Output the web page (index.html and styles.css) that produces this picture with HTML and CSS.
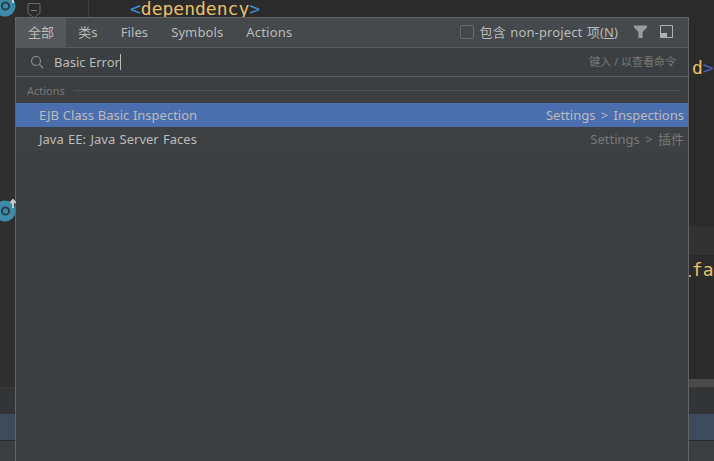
FILE: index.html
```html
<!DOCTYPE html>
<html lang="zh">
<head>
<meta charset="utf-8">
<title>Search Everywhere</title>
<link rel="stylesheet" href="styles.css">
</head>
<body>
<div class="editor">
  <div class="code-area">
    <span class="tag-open"><i>&lt;</i>dependency<i>&gt;</i></span>
    <span class="tag-d">d<i>&gt;</i></span>
    <span class="code-fa">.fa</span>
    <span class="code-dot"></span>
    <svg class="fold" width="14" height="16" viewBox="0 0 14 16"><path d="M1 0.5V10L7 15L13 10V0.5H1" fill="none" stroke="#686a6c"/><path d="M4 7.5H10" stroke="#787a7c"/></svg>
    <span class="gutter-line"></span>
    <span class="right-strip"></span>
    <span class="gutter"></span>
    <svg class="badge badge-a" width="16" height="24" viewBox="0 0 16 24"><circle cx="5" cy="12" r="10.5" fill="#3d8ba8"/><circle cx="5.5" cy="12" r="3.6" fill="none" stroke="#2c3e48" stroke-width="2"/><path d="M13 9V1M10.5 4L13 1L15.5 4" fill="none" stroke="#c4ccd0" stroke-width="2"/></svg>
    <svg class="badge badge-b" width="16" height="24" viewBox="0 0 16 24"><circle cx="5" cy="12" r="10.5" fill="#3d8ba8"/><circle cx="5.5" cy="12" r="3.6" fill="none" stroke="#2c3e48" stroke-width="2"/><path d="M13 9V1M10.5 4L13 1L15.5 4" fill="none" stroke="#c4ccd0" stroke-width="2"/></svg>
  </div>
  <div class="band-dark"></div>
  <div class="band-blue"></div>
  <div class="band-foot"></div>
</div>

<section class="popup">
  <header class="tabs">
    <span class="tab tab-active">全部</span>
    <span class="tab">类s</span>
    <span class="tab">Files</span>
    <span class="tab">Symbols</span>
    <span class="tab">Actions</span>
    <span class="spacer"></span>
    <span class="check"></span>
    <span class="check-label">包含 non-project 项(<u>N</u>)</span>
    <svg class="icon-filter" width="13" height="13" viewBox="0 0 13 13"><path d="M0 0.5H13V2.5L8.6 7V13H4.4V7L0 2.5Z" fill="#9a9c9e"/></svg>
    <svg class="icon-dock" width="13" height="13" viewBox="0 0 13 13"><path d="M0.5 0.5H12.5V12.5H0.5Z" fill="none" stroke="#afb1b3"/><path d="M0.5 8H7V12.5H0.5Z" fill="#afb1b3"/></svg>
  </header>
  <div class="search">
    <svg class="icon-search" width="14" height="14" viewBox="0 0 14 14"><circle cx="6" cy="6" r="4.5" fill="none" stroke="#8c8e90" stroke-width="1.1"/><path d="M9.4 9.4L13 13" stroke="#8c8e90" stroke-width="1.2"/></svg>
    <span class="query">Basic Error</span><span class="caret"></span>
    <span class="spacer"></span>
    <span class="hint">键入 / 以查看命令</span>
  </div>
  <div class="group"><span class="group-name">Actions</span><span class="group-rule"></span></div>
  <div class="row row-selected"><span class="row-name">EJB Class Basic Inspection</span><span class="row-loc">Settings &gt; Inspections</span></div>
  <div class="row row-plain"><span class="row-name">Java EE: Java Server Faces</span><span class="row-loc">Settings &gt; 插件</span></div>
</section>
</body>
</html>
```
FILE: styles.css
```css
* { box-sizing: border-box; }
html, body { margin: 0; height: 100%; }
body {
  width: 714px;
  height: 461px;
  overflow: hidden;
  position: relative;
  background: #2b2b2b;
  font-family: "Noto Sans", "Noto Sans CJK SC", sans-serif;
  font-size: 13px;
  line-height: 16px;
}
i { font-style: normal; }
.editor { height: 461px; display: flex; flex-direction: column; }
.code-area { height: 388px; position: relative; overflow: hidden; background: linear-gradient(to bottom, #2b2b2b 0, #2b2b2b 226px, #323232 226px, #323232 255px, #2b2b2b 255px); border-bottom: 1px solid #3a3a3a; }
.band-dark { height: 26px; background: #333435; }
.band-blue { height: 26px; background: #3d4b5c; }
.band-foot { flex: 1; background: #3c3f41; border-top: 1px solid #2b2b2b; }

.gutter { position: absolute; left: 0; top: 0; width: 15px; height: 387px; background: #2f2f2f; }
.right-strip { position: absolute; left: 689px; right: 0; top: 379px; height: 8px; background: #4a4a4a; }

.tag-open, .tag-d, .code-fa {
  position: absolute;
  font-family: "DejaVu Sans Mono", monospace;
  font-size: 18px;
  color: #e8bf6a;
  line-height: 18px;
}
.tag-open { left: 130px; top: 0; }
.tag-open i { color: #3d8fd6; }
.tag-d { left: 692px; top: 59px; }
.tag-d i { color: #4a5fc0; }
.code-fa { left: 681px; top: 261px; }
.code-dot { position: absolute; left: 689px; top: 275px; width: 2px; height: 2px; background: #b8935a; }

.gutter-line { position: absolute; left: 88px; top: 0; width: 1px; height: 17px; background: #3a4a3a; }
.fold { position: absolute; left: 27px; top: 3px; }

.badge { position: absolute; left: 0; z-index: 1; }
.badge-a { top: -6px; }
.badge-b { top: 199px; }

.popup {
  position: absolute;
  left: 15px;
  top: 17px;
  width: 674px;
  height: 444px;
  background: #3c3f41;
  border: 1px solid #646464;
  border-bottom: 0;
  color: #bbbbbb;
}
.tabs {
  height: 30px;
  display: flex;
  align-items: center;
  background: #45494b;
  border-bottom: 1px solid #5a5a5a;
}
.tab { height: 29px; display: flex; align-items: center; padding: 0 12px 2px; letter-spacing: 0.1px; }
.tab-active { background: #54585b; }
.tab:nth-child(2) { padding-right: 10px; }
.tab:nth-child(3) { padding: 0 12px 2px 13px; }
.tab:nth-child(4) { padding-left: 11px; }
.tab:nth-child(5) { padding-left: 11px; letter-spacing: 0.2px; }
.spacer { flex: 1; }
.check { width: 14px; height: 14px; border: 1px solid #6b6b6b; border-radius: 2px; background: #43474a; margin: 0 6px 2px 0; }
.check-label { margin: 0 16px 2px 0; word-spacing: 1px; letter-spacing: 0.12px; }
.icon-filter { margin: 0 13px 2px 0; }
.icon-dock { margin: 0 15px 2px 0; }

.search { height: 29px; display: flex; align-items: center; padding-left: 14px; border-bottom: 1px solid #5a5a5a; }
.icon-search { margin-right: 10px; }
.query { font-size: 13px; color: #bbbbbb; }
.caret { width: 1px; height: 16px; background: #bbbbbb; margin-left: 0; }
.hint { font-size: 11px; color: #787878; margin-right: 12px; }

.group { height: 26px; display: flex; align-items: center; padding: 2px 8px 0 11px; }
.group-name { font-size: 11px; color: #787878; margin-right: 9px; }
.group-rule { flex: 1; height: 1px; background: #4f5254; margin-bottom: 2px; }

.row { height: 24px; display: flex; align-items: center; justify-content: space-between; padding: 0 4px 0 23px; }
.row-selected { background: #4b6eaf; }
.row-selected .row-name { word-spacing: 0.3px; }
.row-selected .row-loc { color: #bbbbbb; word-spacing: 2px; }
.row-plain { background: #3e4143; }
.row-plain .row-name { word-spacing: 1px; }
.row-plain .row-loc { color: #787878; word-spacing: 2px; }
```
